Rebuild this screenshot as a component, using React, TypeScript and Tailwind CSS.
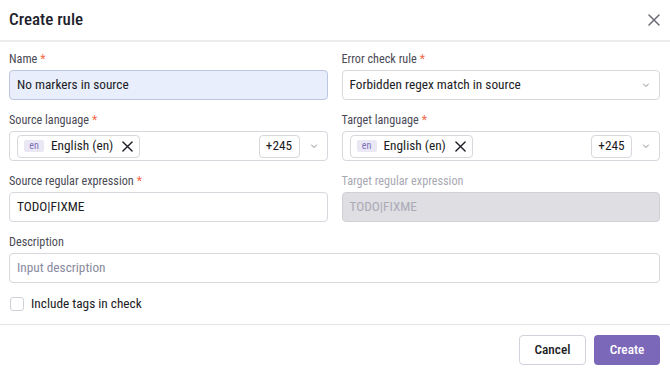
import React, { useState } from 'react';

const Label: React.FC<{ text: string; required?: boolean; muted?: boolean }> = ({ text, required, muted }) => (
  <div className={`h-4 mb-[3px] text-[12.2px] leading-4 ${muted ? 'text-[#a9a9b3]' : 'text-[#4a4a55]'}`}>
    {text}
    {required && <span className="text-[#f26b4a] ml-[3px]">*</span>}
  </div>
);

const Chevron = () => (
  <svg width="10" height="10" viewBox="0 0 10 10" className="text-[#8a8a96]">
    <path d="M2.5 4 L5 6.5 L7.5 4" fill="none" stroke="currentColor" strokeWidth="1" strokeLinecap="round" />
  </svg>
);

const Cross: React.FC<{ size: number; className?: string }> = ({ size, className }) => (
  <svg width={size} height={size} viewBox="0 0 12 12" className={className}>
    <path d="M1 1 L11 11 M11 1 L1 11" fill="none" stroke="currentColor" strokeWidth="1.5" strokeLinecap="round" />
  </svg>
);

const LanguageSelect = () => (
  <div className="h-[30px] flex items-center border border-[#d7d7de] rounded-[4px] pl-[7px] pr-[8px]">
    <div className="h-[23px] w-[123px] flex items-center border border-[#d7d7de] rounded-[4px] pl-[6px]">
      <span className="h-3 w-5 flex items-center justify-center bg-[#ebe8f6] text-[#7d6fba] text-[10px] leading-none rounded-[2px]">en</span>
      <span className="ml-[7px] text-[13.3px] text-[#1c1c24]">English (en)</span>
      <Cross size={11} className="ml-[9px] text-[#1c1c24]" />
    </div>
    <div className="ml-auto h-[23px] w-[41px] flex items-center justify-center border border-[#d7d7de] rounded-[4px] text-[13.3px] text-[#1c1c24]">
      +245
    </div>
    <div className="ml-[9px] w-[10px] flex items-center">
      <Chevron />
    </div>
  </div>
);

export default function App() {
  const [checked, setChecked] = useState(false);

  return (
    <div className="w-[670px] h-[374px] bg-white font-['Roboto',sans-serif] font-stretch-[80%] text-[#1c1c24] flex flex-col">
      <div className="h-[40px] flex items-center justify-between pl-[9px] pr-[10px]">
        <h1 className="text-[17px] font-medium text-[#1f1f2e]">Create rule</h1>
        <Cross size={12} className="text-[#6b6b75]" />
      </div>
      <div className="h-[2px] bg-[#ececef]" />

      <div className="pt-[9px] pl-[9px] pr-[10px] grid grid-cols-2 gap-x-[14px]">
        <div className="mb-3">
          <Label text="Name" required />
          <div className="h-[30px] flex items-center px-[7px] bg-[#e8eefc] border border-[#bcc6e0] rounded-[4px] text-[13.3px]">
            No markers in source
          </div>
        </div>
        <div className="mb-3">
          <Label text="Error check rule" required />
          <div className="h-[30px] flex items-center justify-between pl-[7px] pr-[8px] border border-[#d7d7de] rounded-[4px] text-[13.3px]">
            <span>Forbidden regex match in source</span>
            <Chevron />
          </div>
        </div>

        <div className="mb-3">
          <Label text="Source language" required />
          <LanguageSelect />
        </div>
        <div className="mb-3">
          <Label text="Target language" required />
          <LanguageSelect />
        </div>

        <div className="mb-3">
          <Label text="Source regular expression" required />
          <div className="h-[30px] flex items-center px-[7px] border border-[#d7d7de] rounded-[4px] text-[13.3px]">
            TODO|FIXME
          </div>
        </div>
        <div className="mb-3">
          <Label text="Target regular expression" muted />
          <div className="h-[30px] flex items-center px-[7px] bg-[#dedee3] border border-[#d0d0d7] rounded-[4px] text-[13.3px] text-[#ababb6]">
            TODO|FIXME
          </div>
        </div>

        <div className="col-span-2">
          <Label text="Description" />
          <div className="h-[30px] flex items-center px-[7px] border border-[#d7d7de] rounded-[4px] text-[13.3px] text-[#8a8aa0]">
            Input description
          </div>
        </div>

        <label className="col-span-2 mt-[13px] h-4 flex items-center cursor-pointer">
          <input
            type="checkbox"
            checked={checked}
            onChange={(e) => setChecked(e.target.checked)}
            className="appearance-none ml-[1px] w-[14px] h-[14px] border border-[#cfcfd8] rounded-[3px] bg-white"
          />
          <span className="ml-[7px] text-[13.3px] text-[#1c1c24]">Include tags in check</span>
        </label>
      </div>

      <div className="mt-[12px] h-[1px] bg-[#e3e3e8]" />

      <div className="flex justify-end gap-2 pt-[10px] pr-[10px]">
        <button className="h-[30px] w-[67px] border border-[#d2d2da] rounded-[4px] bg-white text-[13.3px] font-medium text-[#1c1c24]">
          Cancel
        </button>
        <button className="h-[30px] w-[66px] rounded-[4px] bg-[#7b68b9] text-[13.3px] font-medium text-white">
          Create
        </button>
      </div>
    </div>
  );
}
